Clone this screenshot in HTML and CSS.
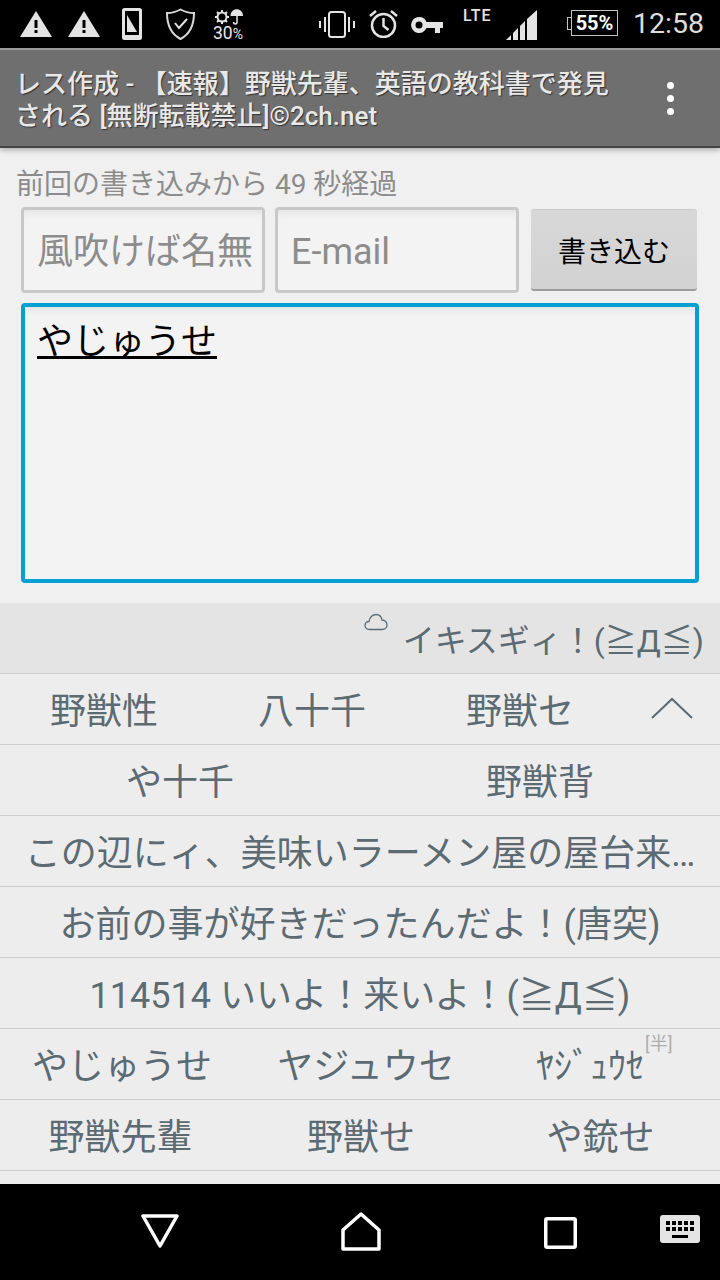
FILE: index.html
```html
<!DOCTYPE html>
<html>
	<head>
		<meta charset="utf-8">
		<title>レス作成</title>
		<link rel="stylesheet" href="styles.css">
	</head>
	<body>
		<div class="statusbar">
			<svg class="ic warn1" width="32" height="26" viewBox="0 0 32 26"><path fill="#e4e4e4" d="M16 0 32 26H0Z"/><path fill="#000" d="M14.500 9h3v8h-3zM14.500 19h3v3h-3z"/></svg>
			<svg class="ic warn2" width="32" height="26" viewBox="0 0 32 26"><path fill="#e4e4e4" d="M16 0 32 26H0Z"/><path fill="#000" d="M14.500 9h3v8h-3zM14.500 19h3v3h-3z"/></svg>
			<svg class="ic sim" width="20" height="32" viewBox="0 0 20 32"><rect width="20" height="32" rx="2.500" fill="#e4e4e4"/><path fill="#000" d="M3 3h14v24H3z"/><path fill="#e4e4e4" d="M5 7 15 24H5Z"/></svg>
			<svg class="ic shield" width="29" height="32" viewBox="0 0 29 32"><path fill="none" stroke="#d8d8d8" stroke-width="2" d="M14.500 1.500C19 4 23 5 28 5 28 17 24 26 14.500 31 5 26 1 17 1 5 6 5 10 4 14.500 1.500Z"/><path fill="none" stroke="#e4e4e4" stroke-width="2" d="M9 15l4 5 8-9"/></svg>
			<div class="weather">
				<svg width="30" height="17" viewBox="0 0 30 17"><circle cx="9" cy="9" r="4.500" fill="none" stroke="#e4e4e4" stroke-width="2"/><path stroke="#e4e4e4" stroke-width="2" d="M9 2v2M9 14v2M2 9h2M14 9h2M4 4l1.500 1.500M14 4l-1.500 1.500M4 14l1.500-1.500M14 14l-1.500-1.500"/><path fill="#e4e4e4" d="M17.500 8c0-9 12.500-9 12.500 0z"/><path fill="none" stroke="#e4e4e4" stroke-width="1.500" d="M24 7v7c0 2.500-3.500 2.500-3.500 0"/></svg>
				<span class="rain">30<small>%</small></span>
			</div>
			<div class="spacer"></div>
			<svg class="ic vibrate" width="36" height="27" viewBox="0 0 36 27"><rect x="10" y="1" width="16" height="25" rx="2.500" fill="none" stroke="#e4e4e4" stroke-width="2"/><path fill="#e4e4e4" d="M5 6h2v15H5zM29 6h2v15h-2zM0 10h2v7H0zM34 10h2v7h-2z"/></svg>
			<svg class="ic alarm" width="29" height="28" viewBox="0 0 29 28"><circle cx="14.500" cy="15.500" r="11.500" fill="none" stroke="#e4e4e4" stroke-width="2.500"/><path fill="none" stroke="#e4e4e4" stroke-width="2.500" d="M14.500 8v8l5 4M1 6l6-5M28 6l-6-5"/></svg>
			<svg class="ic key" width="32" height="16" viewBox="0 0 32 16"><path fill="#e4e4e4" d="M8 0a8 8 0 0 1 7.500 5H32v6h-3v5h-5v-5h-8.500A8 8 0 1 1 8 0Z"/><circle cx="8" cy="8" r="3.500" fill="#000"/></svg>
			<span class="lte">LTE</span>
			<svg class="ic signal" width="31" height="30" viewBox="0 0 31 30"><path fill="#e4e4e4" d="M0 30 5 25V30ZM7 30V23L12 18V30ZM14 30V16L19 11V30ZM21 30V9L31 0V30Z"/></svg>
			<div class="battery">55%</div>
			<span class="clock">12:58</span>
		</div>

		<div class="appbar">
			<div class="apptitle">レス作成 - 【速報】野獣先輩、英語の教科書で発見される [無断転載禁止]©2ch.net</div>
			<div class="menu"><i></i><i></i><i></i></div>
		</div>

		<div class="form">
			<div class="hint">前回の書き込みから 49 秒経過</div>
			<div class="inputs">
				<input class="field" placeholder="風吹けば名無しさん">
				<input class="field" placeholder="E-mail">
				<button class="submit">書き込む</button>
			</div>
			<div class="body-text"><u>やじゅうせ</u></div>
		</div>

		<div class="candidates">
			<div class="cloud-row">
				<svg class="cloud" width="24" height="18" viewBox="0 0 24 18"><path fill="none" stroke="#5c6a72" stroke-width="1.300" d="M6 16.500C2.500 16.500 1 14.500 1 12.500 1 10 3 8.500 5 8.500 5.500 4 9 1.500 12 1.500 15.500 1.500 17.500 4 18 7 21 7 23 9.500 23 12 23 14.500 21 16.500 18 16.500Z"/></svg>
				<span>イキスギィ！(≧Д≦)</span>
			</div>
			<div class="row row-more">
				<div>野獣性</div><div>八十千</div><div>野獣セ</div>
				<svg class="chevron" width="44" height="24" viewBox="0 0 44 24"><path fill="none" stroke="#5c6a72" stroke-width="2" d="M2 22 22 3 42 22"/></svg>
			</div>
			<div class="row row-two"><div>や十千</div><div>野獣背</div></div>
			<div class="row"><div>この辺にィ、美味いラーメン屋の屋台来…</div></div>
			<div class="row"><div>お前の事が好きだったんだよ！(唐突)</div></div>
			<div class="row"><div>114514 いいよ！来いよ！(≧Д≦)</div></div>
			<div class="row row-kana">
				<div>やじゅうせ</div><div>ヤジュウセ</div>
				<div class="half">ﾔｼﾞｭｳｾ<span class="badge">[半]</span></div>
			</div>
			<div class="row row-three"><div>野獣先輩</div><div>野獣せ</div><div>や銃せ</div></div>
			<div class="row"></div>
		</div>

		<div class="navbar">
			<svg class="back" width="38" height="34" viewBox="0 0 38 34"><path fill="none" stroke="#fff" stroke-width="3.500" stroke-linejoin="round" d="M2 2H36L19 32Z"/></svg>
			<svg class="home" width="40" height="39" viewBox="0 0 40 39"><path fill="none" stroke="#fff" stroke-width="3.500" stroke-linejoin="round" d="M20 2 38 18V37H2V18Z"/></svg>
			<svg class="recent" width="33" height="32" viewBox="0 0 33 32"><rect x="1.750" y="1.750" width="29.500" height="28.500" rx="1.500" fill="none" stroke="#fff" stroke-width="3.500"/></svg>
			<svg class="keyboard" width="40" height="28" viewBox="0 0 40 28"><rect width="40" height="28" rx="3" fill="#e4e4e4"/><path fill="#000" d="M6 6h4v4H6zM12 6h4v4h-4zM18 6h4v4h-4zM24 6h4v4h-4zM30 6h4v4h-4zM6 12h4v4H6zM12 12h4v4h-4zM18 12h4v4h-4zM24 12h4v4h-4zM30 12h4v4h-4zM12 20h16v3H12z"/></svg>
		</div>
	</body>
</html>
```

FILE: styles.css
```css
html, body {
	margin: 0;
	padding: 0;
}
body {
	width: 720px;
	height: 1280px;
	overflow: hidden;
	background: #f0f0f0;
	font-family: "Roboto", "Noto Sans CJK JP", sans-serif;
	display: flex;
	flex-direction: column;
}

/* status bar */
.statusbar {
	height: 48px;
	flex: none;
	background: #000;
	color: #e4e4e4;
	display: flex;
	align-items: center;
	padding-left: 20px;
}
.ic { flex: none; }
.warn2 { margin-left: 16px; }
.sim { margin-left: 22px; }
.shield { margin-left: 24px; }
.weather {
	margin-left: 18px;
	width: 30px;
	display: flex;
	flex-direction: column;
	margin-top: 2px;
}
.rain {
	font-size: 17.500px;
	line-height: 17px;
	color: #e8e8e8;
}
.rain small { font-size: 14px; }
.spacer { width: 76px; }
.alarm { margin-left: 14px; }
.key { margin-left: 13px; margin-top: 2px; }
.lte {
	margin-left: 20px;
	width: 30px;
	font-size: 16px;
	font-weight: 500;
	letter-spacing: 1px;
	line-height: 16px;
	margin-top: -17px;
}
.signal { margin-left: 13px; margin-top: 2px; }
.battery {
	margin-left: 34px;
	width: 47px;
	height: 26px;
	box-sizing: border-box;
	border: 1px solid #c4c4c4;
	margin-top: -2px;
	position: relative;
	color: #fff;
	font-size: 20px;
	font-weight: 700;
	line-height: 24px;
	text-align: center;
}
.battery:before {
	content: "";
	position: absolute;
	left: -5px;
	top: 6px;
	height: 11px;
	width: 4px;
	border: 1px solid #c4c4c4;
	border-right: 0;
}
.clock {
	margin-left: 15px;
	font-size: 28.500px;
	line-height: 48px;
	color: #dedede;
}

/* title bar */
.appbar {
	height: 100px;
	flex: none;
	box-sizing: border-box;
	background: #6f6f6f;
	border-top: 2px solid #9a9a9a;
	border-bottom: 2px solid #444;
	box-shadow: 0 2px 6px rgba(0, 0, 0, 0.3);
	display: flex;
	align-items: center;
	padding-left: 15px;
	position: relative;
}
.apptitle {
	width: 600px;
	padding-top: 4px;
	font-size: 26px;
	font-weight: 500;
	line-height: 32px;
	color: #e8e8e8;
	text-shadow: 1px 1px 1px #333;
}
.menu {
	margin-left: 52px;
	display: flex;
	flex-direction: column;
	gap: 6px;
}
.menu i {
	width: 7px;
	height: 7px;
	border-radius: 50%;
	background: #fff;
}

/* form */
.form {
	flex: none;
	height: 455px;
	box-sizing: border-box;
	padding: 0 21px;
}
.hint {
	margin: 19px 0 0 -5px;
	height: 40px;
	font-size: 28px;
	line-height: 36px;
	color: #8c8c8c;
}
.inputs {
	display: flex;
	align-items: center;
	height: 86px;
}
.field {
	width: 244px;
	height: 86px;
	box-sizing: border-box;
	margin: 0 10px 0 0;
	padding: 4px 9px 0 13px;
	border: 3px solid #c8c8c8;
	border-radius: 4px;
	background: #f3f3f3;
	box-shadow: inset 0 8px 8px -6px rgba(0, 0, 0, 0.08);
	font-family: inherit;
	font-size: 36px;
	outline: none;
}
.field::placeholder {
	color: #8c8c8c;
	opacity: 1;
}
.submit {
	width: 166px;
	height: 82px;
	margin-left: 2px;
	padding: 0;
	border: 0;
	border-top: 1px solid #ccc;
	border-bottom: 2px solid #9c9c9c;
	border-radius: 3px;
	background: linear-gradient(#d8d8d8, #d2d2d2);
	font-family: inherit;
	font-size: 28px;
	color: #000;
}
.body-text {
	width: 678px;
	height: 280px;
	margin-top: 10px;
	box-sizing: border-box;
	padding: 10px 12px;
	border: 4px solid #05a0d2;
	border-radius: 4px;
	background: #f3f3f3;
	box-shadow: inset 0 8px 8px -6px rgba(0, 0, 0, 0.08);
	font-size: 36px;
	line-height: 50px;
	color: #000;
}

/* conversion candidates */
.candidates {
	flex: 1;
	overflow: hidden;
	background: #ededed;
	color: #5c6a72;
	font-size: 36px;
}
.cloud-row {
	height: 70px;
	background: #e4e4e4;
	display: flex;
	justify-content: flex-end;
	align-items: center;
	padding-right: 16px;
	position: relative;
	font-size: 32px;
}
.cloud {
	position: absolute;
	right: 332px;
	top: 10px;
}
.row {
	height: 71px;
	box-sizing: border-box;
	padding-bottom: 3px;
	border-top: 1px solid #cdcdcd;
	display: flex;
	align-items: center;
	justify-content: center;
}
.row-more {
	display: grid;
	justify-content: start;
	grid-template-columns: 208px 208px 208px 96px;
	justify-items: center;
}
.row-two {
	display: grid;
	justify-content: start;
	grid-template-columns: 360px 360px;
	justify-items: center;
}
.row-kana {
	display: grid;
	justify-content: start;
	grid-template-columns: 244px 244px 204px;
	justify-items: center;
}
.row-three {
	display: grid;
	justify-content: start;
	grid-template-columns: 241px 240px 239px;
	justify-items: center;
}
.half {
	position: relative;
}
.badge {
	position: absolute;
	left: 100%;
	top: -3px;
	margin-left: 1px;
	font-size: 18px;
	line-height: 20px;
	color: #adadad;
	white-space: nowrap;
}

/* nav bar */
.navbar {
	height: 96px;
	flex: none;
	background: #000;
	display: flex;
	align-items: center;
	padding-left: 141px;
	padding-bottom: 2px;
	box-sizing: border-box;
}
.home { margin-left: 162px; }
.recent { margin-left: 163px; margin-top: 4px; }
.keyboard { margin-left: 83px; margin-top: -4px; }
```
